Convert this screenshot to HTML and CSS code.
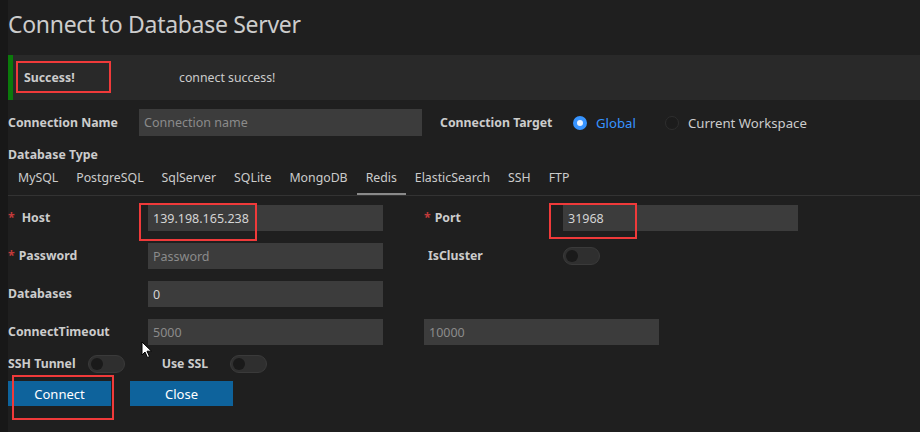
FILE: index.html
```html
<!DOCTYPE html>
<html lang="en">
<head>
<meta charset="utf-8">
<title>Connect to Database Server</title>
<link rel="stylesheet" href="styles.css">
</head>
<body>
<div class="page">
  <h1 class="title">Connect to Database Server</h1>

  <div class="alert">
    <span class="alert-title">Success!</span>
    <span class="alert-msg">connect success!</span>
  </div>

  <div class="name-row">
    <label class="lbl name-lbl">Connection Name</label>
    <input class="inp inp-name" placeholder="Connection name">
    <label class="lbl target-lbl">Connection Target</label>
    <label class="radio checked"><span class="dot"></span>Global</label>
    <label class="radio"><span class="dot"></span>Current Workspace</label>
  </div>

  <div class="lbl section">Database Type</div>

  <div class="tabs">
    <span class="tab">MySQL</span>
    <span class="tab">PostgreSQL</span>
    <span class="tab">SqlServer</span>
    <span class="tab">SQLite</span>
    <span class="tab">MongoDB</span>
    <span class="tab active">Redis</span>
    <span class="tab">ElasticSearch</span>
    <span class="tab">SSH</span>
    <span class="tab">FTP</span>
  </div>

  <div class="form-grid">
    <label class="lbl"><span class="req req-wide">*</span>Host</label>
    <input class="inp" value="139.198.165.238">
    <span></span>
    <label class="lbl"><span class="req">*</span>Port</label>
    <input class="inp" value="31968">

    <label class="lbl"><span class="req">*</span>Password</label>
    <input class="inp" placeholder="Password">
    <span></span>
    <label class="lbl cluster-lbl">IsCluster</label>
    <div class="cell"><span class="switch"></span></div>

    <label class="lbl">Databases</label>
    <input class="inp" value="0">
    <span></span><span></span><span></span>

    <label class="lbl">ConnectTimeout</label>
    <input class="inp" placeholder="5000">
    <span></span>
    <input class="inp inp-span" placeholder="10000">
  </div>

  <div class="switch-row">
    <label class="lbl">SSH Tunnel</label>
    <span class="switch"></span>
    <label class="lbl ssl-lbl">Use SSL</label>
    <span class="switch"></span>
  </div>

  <div class="actions">
    <button class="btn">Connect</button>
    <button class="btn">Close</button>
  </div>

  <div class="mark mark-success"></div>
  <div class="mark mark-host"></div>
  <div class="mark mark-port"></div>
  <div class="mark mark-connect"></div>

  <svg class="cursor" width="12" height="18" viewBox="0 0 12 18">
    <path d="M1 1 L1 14 L4 11 L6.5 16.5 L8.5 15.6 L6 10.2 L10.5 10.2 Z" fill="#ffffff" stroke="#000000" stroke-width="1"/>
  </svg>
</div>
</body>
</html>
```

FILE: styles.css
```css
html, body {
  margin: 0;
  padding: 0;
  background: #181818;
  height: 100%;
}

body {
  font-family: "Noto Sans", "Open Sans", sans-serif;
  font-size: 12.3px;
  color: #cccccc;
}

.page {
  position: relative;
  margin-left: 8px;
  min-height: 432px;
  background: #1f1f1f;
  padding-top: 6px;
  box-sizing: border-box;
  overflow: hidden;
}

.title {
  margin: 0;
  font-size: 23px;
  font-weight: 400;
  line-height: 36px;
  color: #cccccc;
  letter-spacing: -0.3px;
}

.alert {
  margin-top: 13px;
  height: 45px;
  background: #292929;
  border-left: 5px solid #0b7a0b;
  display: flex;
  align-items: center;
  box-sizing: border-box;
}

.alert-title {
  font-weight: 700;
  width: 166px;
  padding-left: 11px;
  box-sizing: border-box;
}

.alert-msg {
  color: #cccccc;
}

.lbl {
  font-weight: 700;
  color: #cccccc;
  line-height: 18px;
  white-space: nowrap;
}

.name-row {
  margin-top: 9px;
  display: flex;
  align-items: center;
  height: 27px;
}

.name-lbl {
  width: 131px;
}

.inp {
  height: 26px;
  background: #3c3c3c;
  border: none;
  outline: none;
  color: #d4d4d4;
  font-family: inherit;
  font-size: 12.5px;
  padding: 0 5px;
  box-sizing: border-box;
  min-width: 0;
}

.inp::placeholder {
  color: #8b8b8b;
}

.inp-name {
  width: 283px;
  height: 27px;
  margin-right: 18px;
}

.target-lbl {
  width: 133px;
}

.radio {
  display: flex;
  align-items: center;
  color: #cccccc;
  font-size: 13.2px;
  margin-right: 29px;
}

.radio .dot {
  width: 14px;
  height: 14px;
  border-radius: 50%;
  box-sizing: border-box;
  border: 1px solid #2e2e2e;
  background: #1c1c1c;
  margin-right: 9px;
}

.radio.checked {
  color: #3794ff;
}

.radio.checked .dot {
  border: 4px solid #3794ff;
  background: #e8f1ff;
}

.section {
  margin-top: 10px;
}

.tabs {
  display: flex;
  border-bottom: 1px solid #333333;
  padding-left: 1px;
}

.tab {
  padding: 5px 9px 6px;
  line-height: 18px;
  border-bottom: 2px solid transparent;
  color: #cccccc;
}

.tab.active {
  border-bottom-color: #8a8a8a;
}

.form-grid {
  margin-top: 9px;
  display: grid;
  grid-template-columns: 140px 235px 41px 139px 235px;
  grid-auto-rows: 26px;
  row-gap: 12px;
  align-items: center;
}

.req {
  color: #c33a3a;
  font-weight: 700;
  margin-right: 4px;
}

.req-wide {
  margin-right: 7px;
}

.cluster-lbl {
  padding-left: 4px;
}

.cell {
  display: flex;
  align-items: center;
}

.inp-span {
  grid-column: 4 / 5;
  width: 235px;
}

.switch {
  display: inline-block;
  position: relative;
  width: 37px;
  height: 18px;
  border-radius: 9px;
  background: #2f2f2f;
  border: 1px solid #3a3a3a;
  box-sizing: border-box;
}

.switch::after {
  content: "";
  position: absolute;
  left: 2px;
  top: 2px;
  width: 12px;
  height: 12px;
  border-radius: 50%;
  background: #1a1a1a;
}

.switch-row {
  margin-top: 10px;
  height: 18px;
  display: flex;
  align-items: center;
}

.switch-row .lbl {
  margin-right: 12px;
}

.switch-row .ssl-lbl {
  margin-left: 37px;
  margin-right: 22px;
}

.actions {
  margin-top: 8px;
  display: flex;
  gap: 19px;
}

.btn {
  width: 103px;
  height: 25px;
  border: none;
  background: #0e639c;
  color: #ffffff;
  font-family: inherit;
  font-size: 13px;
  padding: 0;
}

.mark {
  position: absolute;
  border: 2px solid #f03a3a;
  box-sizing: border-box;
}

.mark-success {
  left: 8px;
  top: 61px;
  width: 95px;
  height: 32px;
}

.mark-host {
  left: 131px;
  top: 203px;
  width: 118px;
  height: 38px;
}

.mark-port {
  left: 541px;
  top: 203px;
  width: 88px;
  height: 36px;
}

.mark-connect {
  left: 4px;
  top: 375px;
  width: 102px;
  height: 45px;
}

.cursor {
  position: absolute;
  left: 133px;
  top: 341px;
}
```
